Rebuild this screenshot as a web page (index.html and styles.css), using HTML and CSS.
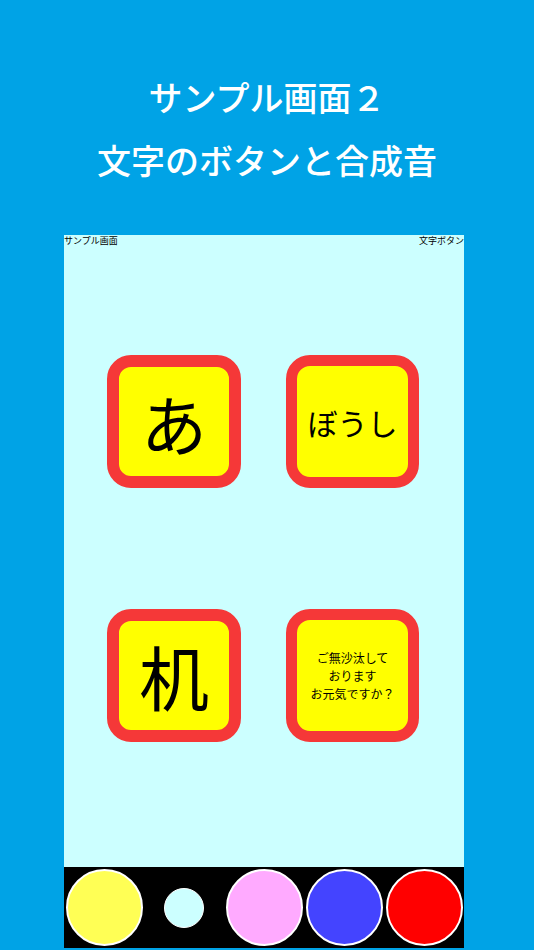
FILE: index.html
```html
<!DOCTYPE html>
<html lang="ja">
<head>
  <meta charset="UTF-8">
  <meta name="viewport" content="width=device-width, initial-scale=1.0">
  <title>サンプル画面２</title>
  <link rel="stylesheet" href="styles.css">
</head>
<body>
  <header class="title">
    <h1>サンプル画面２</h1>
    <h1>文字のボタンと合成音</h1>
  </header>

  <main class="screen">
    <div class="labels">
      <span>サンプル画面</span>
      <span>文字ボタン</span>
    </div>
    <div class="grid">
      <button class="moji big">あ</button>
      <button class="moji mid">ぼうし</button>
      <button class="moji big kanji">机</button>
      <button class="moji small">ご無沙汰して<br>おります<br>お元気ですか？</button>
    </div>
    <nav class="bar">
      <span class="dot yellow"></span>
      <span class="dot cyan tiny"></span>
      <span class="dot pink"></span>
      <span class="dot blue"></span>
      <span class="dot red"></span>
    </nav>
  </main>
</body>
</html>
```

FILE: styles.css
```css
body {
  margin: 0;
  background: #00a3e6;
  font-family: "Noto Sans CJK JP", "Noto Sans", sans-serif;
  width: 534px;
  height: 950px;
  overflow: hidden;
}
.title {
  height: 235px;
  padding-top: 72px;
  box-sizing: border-box;
  text-align: center;
  color: white;
}
.title h1 {
  margin: 0;
  font-size: 34px;
  font-weight: 500;
  line-height: 50px;
  height: 63px;
}
.screen {
  margin-left: 64px;
  width: 400px;
  height: 713px;
  background: #ccffff;
  display: flex;
  flex-direction: column;
}
.labels {
  display: flex;
  justify-content: space-between;
  font-size: 9px;
  line-height: 11px;
  color: #000;
}
.grid {
  flex: 1;
  display: grid;
  grid-template-columns: 134px 133px;
  grid-auto-rows: 133px;
  column-gap: 45px;
  row-gap: 121px;
  padding: 109px 0 0 43px;
}
.moji {
  background: #ffff00;
  border: 12px solid #f53838;
  border-radius: 24px;
  padding: 0;
  color: #000;
  font-family: "Noto Sans CJK JP", sans-serif;
  display: flex;
  align-items: center;
  justify-content: center;
  text-align: center;
}
.moji.big {
  font-size: 66px;
  line-height: 1;
}
.moji.kanji {
  font-size: 70px;
}
.moji.mid {
  font-size: 30px;
  border-width: 11px;
}
.moji.small {
  font-size: 12px;
  line-height: 18px;
  border-width: 11px;
}
.bar {
  height: 81px;
  background: #000;
  display: grid;
  grid-template-columns: repeat(5, 80px);
  align-items: center;
  justify-items: center;
}
.dot {
  width: 73px;
  height: 73px;
  border: 2px solid #fff;
  border-radius: 50%;
}
.dot.tiny {
  width: 38px;
  height: 38px;
  border-width: 1px;
}
.yellow { background: #ffff55; }
.cyan { background: #ccffff; }
.pink { background: #ffaaff; }
.blue { background: #4444ff; }
.red { background: #ff0000; }
```
